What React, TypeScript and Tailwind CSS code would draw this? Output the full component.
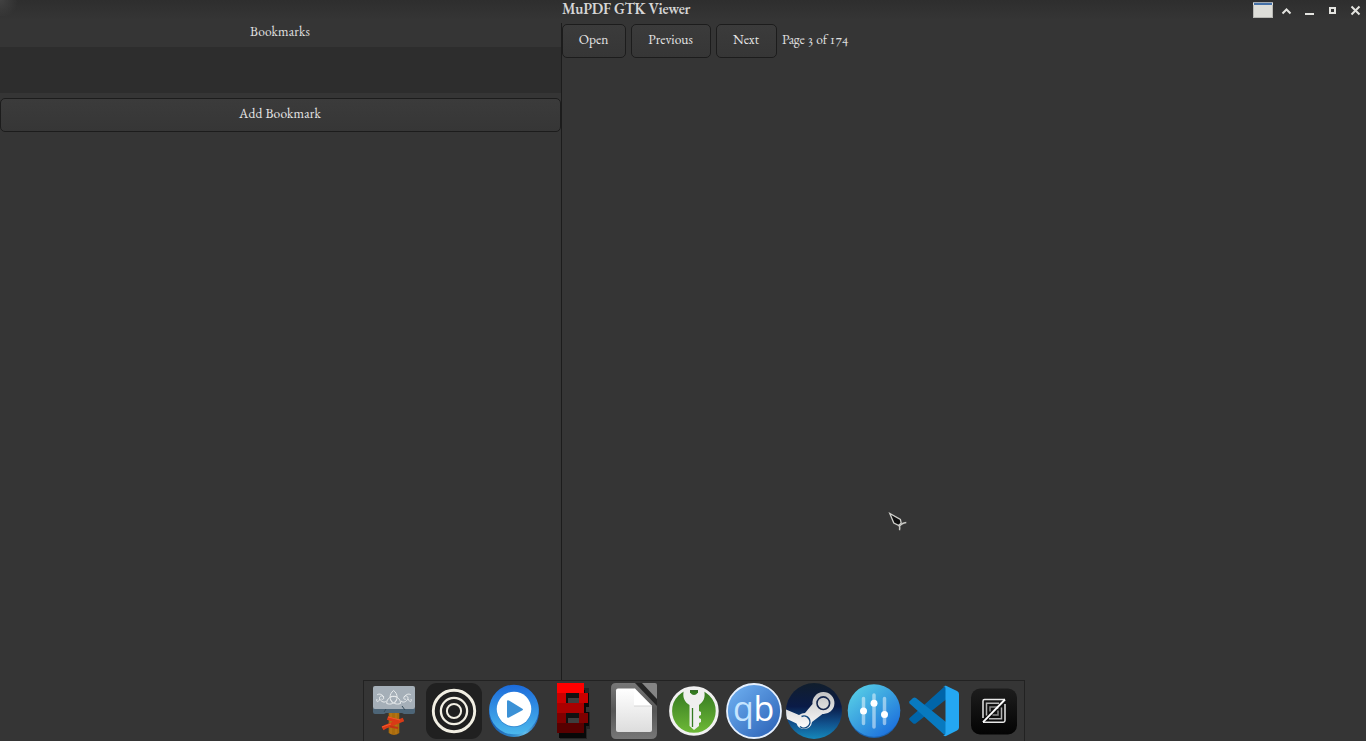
import type { ReactNode } from "react";

const serif = "font-['EB_Garamond','Liberation_Serif',serif] oldstyle-nums";

function GtkButton({ children, className = "" }: { children: ReactNode; className?: string }) {
  return (
    <button
      className={`flex h-[34px] shrink-0 items-center justify-center rounded-[5px] border border-[#1c1c1c] bg-linear-to-b from-[#3b3b3b] to-[#363636] pr-px pb-[3px] text-[13.5px] leading-none text-[#e6e6e6] ${className}`}
    >
      {children}
    </button>
  );
}

function TitleBar() {
  return (
    <header className="flex h-5 shrink-0 items-start bg-linear-to-b from-[#2e2e2e] to-[#353535]">
      <div className="h-4 w-[562px] shrink-0 bg-[radial-gradient(circle_at_0_0,#424242_0,transparent_18px)]" />
      <h1 className="flex-1 text-[15px] leading-[18px] font-semibold tracking-[-0.2px] whitespace-nowrap text-[#d6d6d6]">
        MuPDF GTK Viewer
      </h1>
      <svg className="shrink-0" width="126" height="20" viewBox="0 0 126 20" shapeRendering="crispEdges">
        <rect x="13" y="2" width="20" height="16" fill="#deded9" />
        <rect x="13" y="2" width="20" height="1" fill="#a2aab2" />
        <rect x="14" y="3" width="18" height="2" fill="#4571a8" />
        <path d="M13.5 5v12.5h19V5" fill="none" stroke="#b8b8b4" />
        <path d="M42.5 13.5l4-4 4 4" fill="none" stroke="#e4e4e0" strokeWidth="2" shapeRendering="auto" />
        <rect x="65" y="13" width="9" height="2" fill="#e4e4e0" />
        <rect x="90" y="8" width="5" height="5" fill="none" stroke="#e4e4e0" strokeWidth="2" />
        <path d="M111.5 6.5l8 8m0-8l-8 8" stroke="#e4e4e0" strokeWidth="2" shapeRendering="auto" />
      </svg>
    </header>
  );
}

const Slot = ({ children }: { children: ReactNode }) => (
  <svg width="60" height="60" viewBox="0 0 60 60" className="shrink-0">{children}</svg>
);

function Hammer() {
  return (
    <Slot>
      <path d="M24.700 30h10.600v22q-5 4-10.600 0z" fill="#a96b0d" />
      <path d="M27 31v22m5-21v21" stroke="#bb7d1a" />
      <path d="M9 27h42v4q0 2-2 2h-9l-2-1H22l-2 1h-9q-2 0-2-2z" fill="#4d6577" />
      <rect x="9" y="5" width="42" height="23" rx="2" fill="#a5afb8" />
      <path d="M20 31l2-3m16-3l3 4" stroke="#354a59" />
      <g fill="none" stroke="#e9ecee" strokeWidth="1">
        <path d="M29.600 9.500c-5 4-4 9-1 12.500M29.600 9.500c5 4 4 9 1 12.500" />
        <path d="M22.700 22.500c0-5 4-8 10-7M36.500 22.500c0-5-4-8-10-7M22.700 22.500c4 1.500 8 0 10-4M36.500 22.500c-4 1.500-8 0-10-4" />
        <path d="M22.500 20c-3 3-7-1-7-3s3-3 4-1-1 3-2 2M20 16c-3-4-6-3-7-2m3 4c-2 4-4 3-3 0" />
        <path d="M37 20c3 3 7-1 7-3s-3-3-4-1 1 3 2 2m-2-2c3-4 6-3 7-2m-3 4c2 4 4 3 3 0" />
      </g>
      <path d="M23.500 37l9 3M39.500 38.500L21 46l-2.500 1.500" fill="none" stroke="#d93a16" strokeWidth="3.800" />
      <path d="M26 45.500l8 1.500" stroke="#c43215" strokeWidth="2" />
      <path d="M24 36l12 3m-18 7l9-3" stroke="#f4592b" strokeWidth="1" />
    </Slot>
  );
}

function Rings() {
  return (
    <Slot>
      <rect x="2" y="2" width="56" height="56" rx="11" fill="#202020" />
      <g fill="none" stroke="#f2efe3">
        <circle cx="30" cy="30" r="20.700" strokeWidth="2.900" />
        <circle cx="30" cy="30" r="13.100" strokeWidth="2.300" />
        <circle cx="30" cy="30" r="7.100" strokeWidth="2" />
      </g>
    </Slot>
  );
}

function Play() {
  return (
    <Slot>
      <defs>
        <linearGradient id="play" x2="0" y2="1"><stop stopColor="#1c6bda" /><stop offset="1" stopColor="#4bb8ed" /></linearGradient>
        <linearGradient id="playEdge"><stop stopColor="#1657ae" /><stop offset=".5" stopColor="#318ccc" /><stop offset=".72" stopColor="#62bdeb" /><stop offset="1" stopColor="#1657ae" /></linearGradient>
      </defs>
      <circle cx="30" cy="31" r="25" fill="url(#playEdge)" />
      <circle cx="30" cy="28.500" r="24.800" fill="url(#play)" />
      <circle cx="30" cy="29" r="17.300" fill="#2770bd" opacity=".5" />
      <circle cx="30" cy="28" r="17.300" fill="#fff" />
      <path d="M23 20.500q0-2 2-1l13 8q2 1 0 2l-13 7q-2 1-2-1z" fill="#3b91d6" />
    </Slot>
  );
}

function RedB() {
  return (
    <Slot>
      <path d="M18 7h27v17h-3v7h4v17h-3v10H16V51h-2" fill="#242424" />
      <path d="M15 9h26v3h4v14h-3v5h3v14h-3v12H15z" fill="#090909" />
      <path d="M13 47h25v10H15V51h-2z" fill="#080808" />
      <path d="M13 2h27v10H13z" fill="#f00" />
      <path d="M13 12h31v10H13z" fill="#cb0000" />
      <path d="M13 22h27v10H13z" fill="#aa0000" />
      <path d="M13 32h31v10H13z" fill="#800000" />
      <path d="M13 42h27v10H13z" fill="#580000" />
      <path d="M22 12h13v10H22zM22 32h13v10H22z" fill="#111" />
      <path d="M24 17h11v5H24zM24 37h11v5H24z" fill="#3e3e3e" />
    </Slot>
  );
}

function Office() {
  return (
    <Slot>
      <defs>
        <linearGradient id="frame" x2="0" y2="1"><stop stopColor="#777" /><stop offset=".5" stopColor="#565656" /><stop offset="1" stopColor="#777" /></linearGradient>
        <linearGradient id="sheet" x2="0" y2="1"><stop stopColor="#fff" /><stop offset="1" stopColor="#ddd" /></linearGradient>
      </defs>
      <path d="M12 2h22l19 20v30q0 6-6 6H12q-5 0-5-6V7q0-5 5-5z" fill="url(#frame)" />
      <path d="M33 2h5l15 16v7L31 2z" fill="#252525" />
      <path d="M38 2h13q2 0 2 2v14z" fill="#858585" />
      <path d="M14 7.500h17L48 25v24q0 2-2 2H14q-2 0-2-2V9.500q0-2 2-2z" fill="url(#sheet)" />
      <path d="M30 7.500L48 25H30z" fill="#fff" />
      <path d="M30 25h18" stroke="#d4d4d4" />
    </Slot>
  );
}

function KeySafe() {
  return (
    <Slot>
      <defs><linearGradient id="green" x2="0" y2="1"><stop stopColor="#31751f" /><stop offset="1" stopColor="#70bb38" /></linearGradient></defs>
      <circle cx="29.900" cy="30" r="23.300" fill="url(#green)" stroke="#f1f1f1" strokeWidth="3" />
      <path d="M20 9q5-5 20 0c2 8-1 12-5 15v6l2 1v3l-2 1v2l2 1v3l-2 1v3l-5 4-4.500-4V24c-5-3-7.500-8-5.500-15z" fill="#efefef" />
      <path d="M26 9.500h8v2q-4 5-8 0z" fill="#347a21" />
      <path d="M28.500 27v19" stroke="#347a21" strokeWidth="1.300" />
      <path d="M26 9.700h8" stroke="#245919" />
    </Slot>
  );
}

function Torrent() {
  return (
    <Slot>
      <defs><linearGradient id="qb" x2="1" y2="1"><stop stopColor="#72b4f4" /><stop offset="1" stopColor="#285eb4" /></linearGradient></defs>
      <circle cx="30" cy="30" r="27" fill="url(#qb)" stroke="#e6f1ff" strokeWidth="1.800" />
      <text x="9" y="39.500" fontFamily="Open Sans, sans-serif" fontSize="34" fill="#c5e5ff">q</text>
      <text x="29.500" y="39.500" fontFamily="Open Sans, sans-serif" fontSize="34" fill="#fff">b</text>
    </Slot>
  );
}

function Steam() {
  return (
    <Slot>
      <defs>
        <linearGradient id="steam" x2="0" y2="1"><stop stopColor="#111e2c" /><stop offset=".42" stopColor="#0a1b47" /><stop offset=".72" stopColor="#11518c" /><stop offset="1" stopColor="#1588bb" /></linearGradient>
        <linearGradient id="arm" gradientUnits="userSpaceOnUse" x1="0" y1="12" x2="0" y2="49"><stop stopColor="#c5c5c5" /><stop offset="1" stopColor="#fff" /></linearGradient>
      </defs>
      <circle cx="30" cy="30" r="28" fill="url(#steam)" />
      <path d="M2 28.500L15 34q3-2 6-2l7.500-9a11 11 0 1 1 10 10L28 41a8 8 0 0 1-15.500 1.500L3 38q-1-4-1-9.500z" fill="url(#arm)" />
      <circle cx="39.300" cy="22.200" r="6.300" fill="none" stroke="#14254c" strokeWidth="1.600" />
      <path d="M17.500 35.500a6 6 0 1 1-1.500 10" fill="none" stroke="#124a80" strokeWidth="1.500" />
    </Slot>
  );
}

function Mixer() {
  return (
    <Slot>
      <defs><linearGradient id="mixer" x1=".1" y1=".05" x2=".9" y2=".95"><stop stopColor="#58d0e7" /><stop offset=".52" stopColor="#379cdf" /><stop offset="1" stopColor="#196bdd" /></linearGradient></defs>
      <circle cx="30" cy="31" r="26" fill="#1b62af" />
      <circle cx="30" cy="29.500" r="26.300" fill="url(#mixer)" />
      <path d="M19.500 17.500v25M30 14v32M40.500 17.500v25" stroke="#fff" strokeOpacity=".48" strokeWidth="3.500" strokeLinecap="round" />
      <g fill="#fff"><circle cx="19.500" cy="30" r="3.500" /><circle cx="30" cy="22.300" r="3.500" /><circle cx="40.500" cy="33.500" r="3.500" /></g>
    </Slot>
  );
}

function Code() {
  return (
    <Slot>
      <path d="M5.600 37q-1 1 0 2l3.400 3.300q1.500 1 3 0L42 18.500V5q-1 0-2 1z" fill="#0065a9" />
      <path d="M5.600 22.500q-1-1 0-2.200L9 17q1.500-1 3 0l30 24v13.500l-2-1z" fill="#087ac0" />
      <path d="M42 4.700l11 5.300q2 1 2 3v33.500q0 2-2 3L42 55q-2 .5-3-1 2.500 1 2.500-2V7.500q0-3-2.500-2 1-1 3-.8z" fill="#24a7f2" />
    </Slot>
  );
}

function Zed() {
  return (
    <Slot>
      <defs><linearGradient id="zed" x2="0" y2="1"><stop stopColor="#1d1d1d" /><stop offset="1" stopColor="#030303" /></linearGradient></defs>
      <rect x="7" y="7.500" width="46" height="46" rx="9" fill="url(#zed)" />
      <g fill="none" stroke="#e8e8e8" strokeWidth="1.500">
        <path d="M19 37V20q0-1.500 1.500-1.500H41" />
        <path d="M41 23v16.500q0 1.700-1.700 1.700H19" />
        <path d="M22.500 34.500V22.200H35M37.500 26.500v11.200H25" stroke="#b5b5b5" />
        <path d="M26 30.500V26h6.500q1.500 0 1 2M34 29.500V34h-5.500" stroke="#8c8c8c" />
        <path d="M41 18.500L19 41.200" stroke="#fff" strokeWidth="1.900" />
      </g>
    </Slot>
  );
}

function Dock() {
  return (
    <nav className="absolute bottom-0 left-[363px] flex h-[61px] w-[662px] border border-b-0 border-[#222] bg-[#353535]">
      <Hammer /><Rings /><Play /><RedB /><Office /><KeySafe /><Torrent /><Steam /><Mixer /><Code /><Zed />
    </nav>
  );
}

export default function App() {
  return (
    <div className={`relative flex h-[741px] w-[1366px] flex-col overflow-hidden bg-[#353535] ${serif}`}>
      <TitleBar />
      <main className="flex min-h-0 flex-1 pt-[3px]">
        <aside className="flex w-[561px] shrink-0 flex-col">
          <h2 className="h-6 pr-px text-center text-[13.5px] leading-4 tracking-[0.15px] text-[#e0e0e0]">Bookmarks</h2>
          <div className="h-[46px] bg-[#2d2d2d]" />
          <GtkButton className="mt-[5px] w-full tracking-[0.18px]">Add Bookmark</GtkButton>
        </aside>
        <section className="flex flex-1 items-start border-l border-[#1c1c1c] pt-px">
          <GtkButton className="w-16">Open</GtkButton>
          <GtkButton className="ml-[5px] w-20">Previous</GtkButton>
          <GtkButton className="ml-[5px] w-[61px]">Next</GtkButton>
          <p className="ml-[5px] pt-[7px] text-[13.5px] leading-4 tracking-[-0.15px] whitespace-nowrap text-[#e0e0e0]">
            Page 3 of 174
          </p>
        </section>
      </main>
      <svg className="absolute top-[512px] left-[888px]" width="22" height="22" viewBox="0 0 22 22">
        <path d="M1.800 1.500l4 9.500 5 2.500 2.400-2.500-.8-3.500z" fill="#101010" stroke="#cfcfcb" strokeWidth="1.300" />
        <path d="M10.500 12.800q2 2 1 5.500M11.500 14.500q2-3.500 6.800-4" fill="none" stroke="#c9c9c5" strokeWidth="1.300" />
      </svg>
      <Dock />
    </div>
  );
}
